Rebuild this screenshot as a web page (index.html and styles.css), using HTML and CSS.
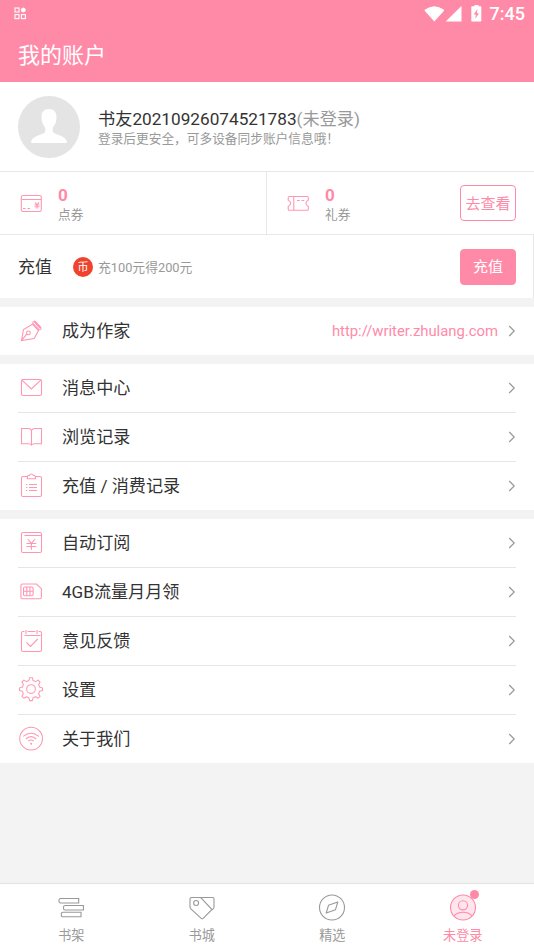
FILE: index.html
```html
<!DOCTYPE html>
<html lang="zh-CN">
<head>
<meta charset="utf-8">
<meta name="viewport" content="width=device-width, initial-scale=1">
<title>我的账户</title>
<link rel="stylesheet" href="styles.css">
</head>
<body>
<div class="app">
  <header class="header">
    <div class="status">
      <svg class="status-app" width="13" height="13" viewBox="0 0 13 13" fill="none" stroke="#fff" stroke-width="1.1"><rect x="1" y="1" width="4" height="4"/><circle cx="9.3" cy="3" r="2.1" fill="#fff" stroke-width=".6"/><rect x="1" y="7.6" width="4" height="4"/><rect x="7.4" y="7.6" width="4" height="4"/></svg>
      <svg width="60" height="18" viewBox="0 0 60 18" fill="#fff"><path d="M.7 6.800V5.800Q10.300-1.500 20 5.800V6.800L10.300 17.500Z"/><path d="M37.500 2V17.500H21.600Z"/><path fill-rule="evenodd" d="M50.500 1h4v1.300h2a.8.800 0 0 1 .8.800v13.600a.8.800 0 0 1-.8.800h-8.400a.8.800 0 0 1-.8-.8V3.100a.8.800 0 0 1 .8-.8h2.400zM53.500 5L49.700 10.500h2.200l-.6 4.200 3.700-5.500h-2.200z"/></svg>
      <span class="clock">7:45</span>
    </div>
    <h1 class="title">我的账户</h1>
  </header>

  <section class="profile">
    <svg class="avatar" width="62" height="62" viewBox="0 0 62 62"><circle cx="31" cy="31" r="31" fill="#e4e4e4"/><path fill="#fff" d="M31 13c5 0 7.500 3 7.500 8 0 5-1.300 7.500-3.500 10.500-1 4 0 5.500 3 6.500 6 2 9 3.500 10.500 6.500.8 1.800.5 2.500-1 2.500h-33c-1.500 0-1.800-.7-1-2.500C15 41.500 18 40 24 38c3-1 4-2.500 3-6.500-2.200-3-3.500-5.500-3.500-10.500 0-5 2.500-8 7.500-8Z"/></svg>
    <div class="profile-text">
      <div class="name">书友20210926074521783<span>(未登录)</span></div>
      <div class="hint">登录后更安全，可多设备同步账户信息哦！</div>
    </div>
  </section>

  <section class="wallet">
    <div class="coupon">
      <svg class="icon" viewBox="0 0 26 26"><rect x="3.300" y="5.500" width="20" height="16" rx="1.800"/><path d="M3.300 9.500h20M5 18.500h2.500M9.500 18.500h2.500M17 12.300l2 2.600 2-2.600M16.500 15h5M16.500 16.800h5M19 14.800v4"/></svg>
      <div class="amount"><b>0</b><span>点券</span></div>
    </div>
    <div class="coupon">
      <svg class="icon" viewBox="0 0 26 26"><path d="M4.500 6.500h17.500q1.300 0 1.300 1.300v2.400q-2.400 1-2.400 3.100t2.400 3.100v2.600q0 1.300-1.300 1.300H4.500q-1.300 0-1.300-1.300v-2.600Q5.600 15.500 5.600 13.300T3.200 10.200V7.800Q3.200 6.500 4.500 6.500ZM8.800 6.500v13.800M12 10.500h2.800M16.500 10.500h2.800"/></svg>
      <div class="amount"><b>0</b><span>礼券</span></div>
      <button class="btn btn-outline">去查看</button>
    </div>
  </section>

  <section class="recharge">
    <span class="recharge-title">充值</span>
    <span class="coin">币</span>
    <span class="offer">充100元得200元</span>
    <button class="btn btn-solid">充值</button>
  </section>

  <nav class="group">
    <a class="row">
      <svg class="icon" viewBox="0 0 26 26"><path d="M3.500 22.500L5.500 11.500 14.500 6.200 20.500 12.500 16.200 20.500ZM3.800 22.200l5.400-6.600"/><circle cx="10.400" cy="14.900" r="1.900"/><path d="M14.900 4.200q1.200-1.800 2.600-.5l5.100 5.500q1 1.400-.3 2.300-.8.500-1.500-.2l-5.600-5.700q-.6-.6-.3-1.400ZM16.500 4l5.600 6"/></svg>
      <span>成为作家</span><em>http://writer.zhulang.com</em>
      <svg class="chevron" viewBox="0 0 8 12"><path d="M1.200 1l5 5-5 5"/></svg>
    </a>
  </nav>

  <nav class="group">
    <a class="row">
      <svg class="icon" viewBox="0 0 26 26"><rect x="3.500" y="4.500" width="20" height="16" rx="1.500"/><path d="M4 5.200l9.400 8.800 9.400-8.800"/></svg>
      <span>消息中心</span>
      <svg class="chevron" viewBox="0 0 8 12"><path d="M1.200 1l5 5-5 5"/></svg>
    </a>
    <a class="row">
      <svg class="icon" viewBox="0 0 26 26"><path d="M13.500 6.400Q12.500 4.500 10.500 4.500H3.500v15.200h7.300q1.800 0 2.700 1.300.9-1.300 2.700-1.300h7.300V4.500h-7q-2 0-3 1.900ZM13.500 6.400V21"/></svg>
      <span>浏览记录</span>
      <svg class="chevron" viewBox="0 0 8 12"><path d="M1.200 1l5 5-5 5"/></svg>
    </a>
    <a class="row">
      <svg class="icon" viewBox="0 0 26 26"><path d="M9.400 3.500H5q-1.500 0-1.500 1.500v17q0 1.500 1.500 1.500h17q1.500 0 1.500-1.500V5q0-1.500-1.500-1.500h-4.500"/><path d="M9.400 5.800V3.500q0-1 1-1h1q.2-1.500 2-1.500t2 1.500h1q1 0 1 1v2.300ZM8 11.500h1.300M11 11.500h8M8 14.500h1.300M11 14.500h8M8 17.500h1.300M11 17.500h8"/></svg>
      <span>充值 / 消费记录</span>
      <svg class="chevron" viewBox="0 0 8 12"><path d="M1.200 1l5 5-5 5"/></svg>
    </a>
  </nav>

  <nav class="group">
    <a class="row">
      <svg class="icon" viewBox="0 0 26 26"><rect x="3.500" y="2.500" width="20" height="20" rx="1.500"/><path d="M6.500 5.500h17M9.700 9l3.700 4.400L17.100 9M8.500 13.500h9.800M8.500 16.500h9.800M13.400 13.400v6.300"/></svg>
      <span>自动订阅</span>
      <svg class="chevron" viewBox="0 0 8 12"><path d="M1.200 1l5 5-5 5"/></svg>
    </a>
    <a class="row">
      <svg class="icon" viewBox="0 0 26 26"><path d="M4.500 5h14l4.900 4.700v8.500q0 1.600-1.600 1.600H4.500Q2.900 19.800 2.900 18.200V6.600Q2.900 5 4.500 5Z"/><rect x="5.500" y="8" width="9.600" height="8.800" rx="1.500"/><path d="M8.800 8v8.800M12 8v8.800M5.500 12.300h3.300M8.800 12.300H12M12 12.300h3.100"/></svg>
      <span>4GB流量月月领</span>
      <svg class="chevron" viewBox="0 0 8 12"><path d="M1.200 1l5 5-5 5"/></svg>
    </a>
    <a class="row">
      <svg class="icon" viewBox="0 0 26 26"><path d="M6.500 3.500H5q-1.500 0-1.500 1.500v17q0 1.500 1.500 1.500h17q1.500 0 1.500-1.500V5q0-1.500-1.500-1.500h-1.500M9.500 3.500h8M8 2v4M19 2v4M6.500 7.500h16M8.500 14.500l4 4 7.200-7.500"/></svg>
      <span>意见反馈</span>
      <svg class="chevron" viewBox="0 0 8 12"><path d="M1.200 1l5 5-5 5"/></svg>
    </a>
    <a class="row">
      <svg class="icon" viewBox="-.5 .8 27.400 27.400"><path stroke-linejoin="round" d="M11.800 1.500h2.800l.8 3.100q1.400.4 2.500 1.100l2.900-1.600 2 2-1.600 2.900q.7 1.100 1 2.400l3.100.9v2.800l-3.100.8q-.3 1.300-1 2.500l1.600 2.800-2 2-2.900-1.600q-1.100.7-2.500 1l-.8 3.100h-2.800l-.9-3.100q-1.300-.3-2.400-1l-2.900 1.600-2-2 1.600-2.800q-.7-1.200-1-2.500l-3.100-.8v-2.800l3.100-.9q.3-1.300 1-2.400L3.600 6.100l2-2 2.900 1.600q1.100-.7 2.400-1.100Z"/><circle cx="13.200" cy="13.500" r="4.600"/></svg>
      <span>设置</span>
      <svg class="chevron" viewBox="0 0 8 12"><path d="M1.200 1l5 5-5 5"/></svg>
    </a>
    <a class="row">
      <svg class="icon" viewBox="0 0 26 26"><circle cx="13.100" cy="12.600" r="11.400"/><path d="M5.200 10.400Q13 4 20.800 10.400M7.800 13Q13 8.300 18.200 13M10.300 15.200Q13 12.800 15.700 15.200"/><circle cx="13.200" cy="17.700" r=".5"/></svg>
      <span>关于我们</span>
      <svg class="chevron" viewBox="0 0 8 12"><path d="M1.200 1l5 5-5 5"/></svg>
    </a>
  </nav>

  <footer class="tabs">
    <a class="tab">
      <svg viewBox="0 0 28 28"><path d="M3.700 4.500h18v4.500h-18q-1.700 0-1.700-1.500V6q0-1.500 1.700-1.500ZM8.200 11.500h18.200v4.500H8.200q-1.700 0-1.700-1.500v-1.500q0-1.500 1.700-1.500ZM6 18.300h18v4.500H6q-1.700 0-1.700-1.500v-1.500q0-1.500 1.700-1.500Z"/></svg>
      <span>书架</span>
    </a>
    <a class="tab">
      <svg viewBox="0 0 28 28"><path d="M3.500 3.500h8q1.200 0 2 .8L24 15.500 15.200 24.300q-1 .9-2 0L2.600 14.600Q2 14 2 13V5Q2 3.500 3.500 3.500ZM12.500 3.500h12q1.500 0 1.500 1.500v8q0 1-.6 1.600L24 15.800"/><circle cx="8.100" cy="9" r="2.500"/></svg>
      <span>书城</span>
    </a>
    <a class="tab">
      <svg viewBox="0 0 28 28"><circle cx="14" cy="13.500" r="12.500"/><path stroke-linejoin="round" d="M19.800 8l-2.300 7.700L8.200 19l2.300-7.700Z"/></svg>
      <span>精选</span>
    </a>
    <a class="tab active">
      <svg viewBox="0 0 28 28"><circle cx="14" cy="13.500" r="12.500" fill="#ffe5ec"/><circle cx="14" cy="11.300" r="4.600"/><path d="M5 22Q8 18.200 14 18.200T23 22"/></svg>
      <i class="dot"></i>
      <span>未登录</span>
    </a>
  </footer>
</div>
</body>
</html>
```
FILE: styles.css
```css
* { box-sizing: border-box; }
body {
  margin: 0;
  background: #f3f3f3;
  color: #333;
  font-family: Roboto, "Noto Sans CJK SC", sans-serif;
}
.app { display: flex; flex-direction: column; height: 950px; }

.header { height: 82px; background: #ff8aa8; color: #fff; }
.status { display: flex; align-items: center; height: 27px; padding: 0 9px 0 14px; }
.status svg { flex: none; }
.status svg + svg { margin-top: -1px; }
.status-app { margin-right: auto; }
.clock { margin-left: 6px; font-size: 18px; font-weight: 500; line-height: 27px; }
.title { margin: 12px 0 0 18px; font-size: 22px; font-weight: 400; line-height: 34px; }

.profile { display: flex; align-items: center; height: 89px; padding: 0 18px; background: #fff; }
.avatar { flex: none; }
.profile-text { margin: 2px 0 0 18px; }
.name { font-size: 17.200px; line-height: 22px; white-space: nowrap; }
.name span { color: #999; }
.hint { color: #999; font-size: 12.700px; line-height: 18px; white-space: nowrap; }

.wallet {
  display: grid;
  grid-template-columns: 267px 267px;
  height: 64px;
  background: #fff;
  border-top: 1px solid #e8e8e8;
  border-bottom: 1px solid #e8e8e8;
}
.coupon { display: flex; align-items: center; padding: 0 18px; }
.coupon:first-child { border-right: 1px solid #e8e8e8; }
.amount { display: flex; flex-direction: column; margin: 3px auto 0 14px; }
.amount b { color: #ff8aa8; font-size: 17px; line-height: 20px; }
.amount span { color: #999; font-size: 12.700px; line-height: 20px; }

.icon { flex: none; width: 26px; height: 26px; fill: none; stroke: #ff97b2; stroke-width: 1.100; }

.btn {
  width: 56px;
  height: 36px;
  padding: 0;
  border: 1px solid #ff8aa8;
  border-radius: 4px;
  font-family: inherit;
  font-size: 15px;
  line-height: 34px;
  white-space: nowrap;
}
.btn-outline { padding-top: 1px; background: #fff; color: #ff8aa8; }
.btn-solid { margin-left: auto; background: #ff8aa8; color: #fff; }

.recharge {
  display: flex;
  align-items: center;
  height: 63px;
  padding: 0 17px 0 18px;
  border-right: 1px solid #e8e8e8;
  background: #fff;
}
.recharge-title { margin-top: -3px; font-size: 17px; }
.coin {
  width: 20px;
  height: 20px;
  margin: 1px 5px 0 21px;
  border-radius: 50%;
  background: #f0432e;
  color: #fff;
  font-size: 11px;
  line-height: 21px;
  text-align: center;
}
.offer { font-size: 12.800px; color: #999; }

.group { margin-top: 9px; padding: 0 18px; background: #fff; }
.row { display: flex; align-items: center; height: 49px; border-bottom: 1px solid #e6e6e6; }
.row:last-child { height: 48px; border-bottom: 0; }
.row span { margin: 0 auto 0 18px; font-size: 17.100px; line-height: 24px; }
.row em { margin: -1px 10px 0 0; color: #ff8aa8; font-size: 14.850px; font-style: normal; }
.chevron { flex: none; width: 8px; height: 12px; margin-top: -1px; fill: none; stroke: #999; stroke-width: 1.200; }

.tabs {
  display: flex;
  height: 67px;
  margin-top: auto;
  padding: 0 6px;
  border-top: 1px solid #e2e2e2;
  background: #fff;
}
.tab { position: relative; display: flex; flex: 1; flex-direction: column; align-items: center; padding-top: 10px; color: #999; }
.tab svg { width: 28px; height: 28px; fill: none; stroke: #999; stroke-width: 1.100; }
.tab span { margin-top: 5px; font-size: 13.100px; line-height: 18px; }
.active { color: #ff8aa8; }
.active svg { stroke: #ff8aa8; }
.dot { position: absolute; top: 6px; left: calc(50% + 7px); width: 9px; height: 9px; border-radius: 50%; background: #ff8aa8; }
```
